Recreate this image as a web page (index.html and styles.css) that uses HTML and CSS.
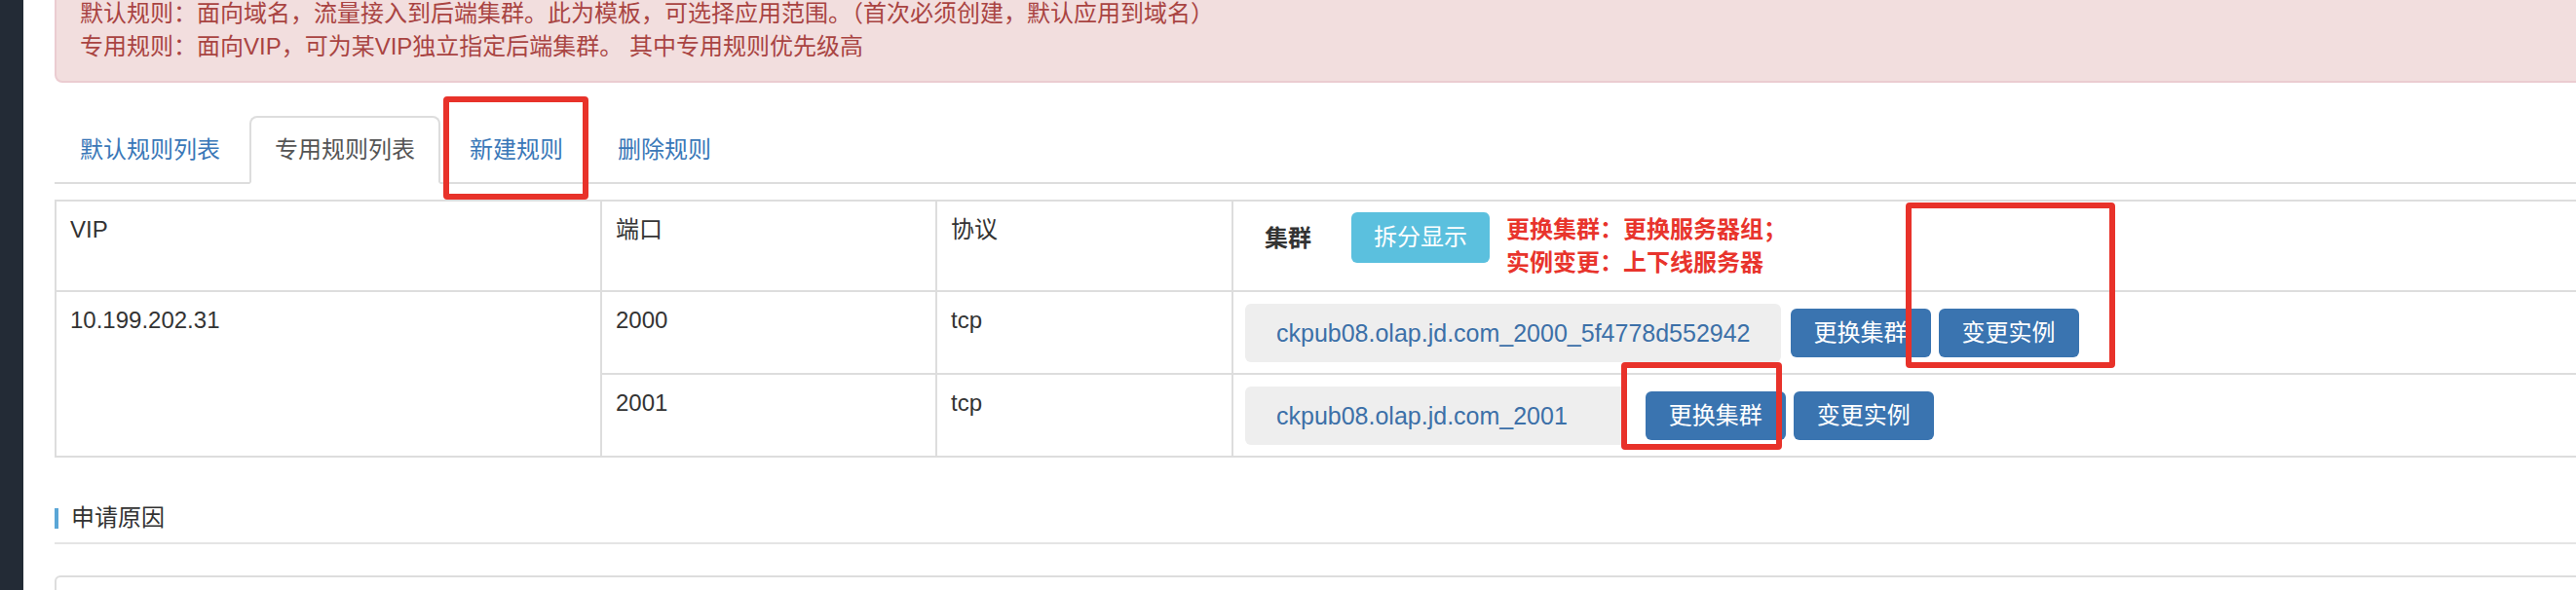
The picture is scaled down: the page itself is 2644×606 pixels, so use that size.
FILE: index.html
```html
<!DOCTYPE html>
<html lang="zh-CN">
<head>
<meta charset="utf-8">
<title>专用规则列表</title>
<link rel="stylesheet" href="styles.css">
</head>
<body>
<div class="page">
  <aside class="sidebar"></aside>
  <main class="content">
    <div class="alert">
      <p>默认规则：面向域名，流量接入到后端集群。此为模板，可选择应用范围。（首次必须创建，默认应用到域名）</p>
      <p>专用规则：面向VIP，可为某VIP独立指定后端集群。 其中专用规则优先级高</p>
    </div>

    <ul class="tabs">
      <li class="tab"><a>默认规则列表</a></li>
      <li class="tab tab-active"><a>专用规则列表</a></li>
      <li class="tab"><a>新建规则</a></li>
      <li class="tab"><a>删除规则</a></li>
    </ul>

    <table class="rules">
      <colgroup>
        <col class="col-vip">
        <col class="col-port">
        <col class="col-proto">
        <col class="col-cluster">
      </colgroup>
      <thead>
        <tr>
          <th>VIP</th>
          <th>端口</th>
          <th>协议</th>
          <th class="cluster-cell">
            <div class="cluster-head">
              <span class="cluster-label">集群</span>
              <span class="btn btn-info">拆分显示</span>
              <div class="cluster-tip">
                <div>更换集群：更换服务器组；</div>
                <div>实例变更：上下线服务器</div>
              </div>
            </div>
          </th>
        </tr>
      </thead>
      <tbody>
        <tr>
          <td rowspan="2">10.199.202.31</td>
          <td>2000</td>
          <td>tcp</td>
          <td class="cluster-cell">
            <div class="cluster-row">
              <span class="cluster-name">ckpub08.olap.jd.com_2000_5f4778d552942</span>
              <span class="btn btn-primary">更换集群</span>
              <span class="btn btn-primary">变更实例</span>
            </div>
          </td>
        </tr>
        <tr>
          <td>2001</td>
          <td>tcp</td>
          <td class="cluster-cell">
            <div class="cluster-row">
              <span class="cluster-name cluster-name-short">ckpub08.olap.jd.com_2001</span>
              <span class="btn btn-primary">更换集群</span>
              <span class="btn btn-primary">变更实例</span>
            </div>
          </td>
        </tr>
      </tbody>
    </table>

    <section class="reason">
      <h4 class="reason-title"><span class="reason-bar"></span>申请原因</h4>
      <div class="reason-box"></div>
    </section>
  </main>

  <div class="mark mark-new"></div>
  <div class="mark mark-instance"></div>
  <div class="mark mark-cluster"></div>
</div>
</body>
</html>
```

FILE: styles.css
```css
html, body {
  margin: 0;
  padding: 0;
  overflow: hidden;
  background: #fff;
}

body {
  font-family: "Liberation Sans", "Noto Sans CJK SC", sans-serif;
  font-size: 24px;
  line-height: 34px;
  color: #333;
}

.page {
  position: relative;
  display: flex;
  min-height: 606px;
}

.sidebar {
  flex: 0 0 24px;
  background: #232b36;
}

.content {
  flex: 0 0 2700px;
  padding-left: 32px;
}

/* alert */
.alert {
  margin-top: -25px;
  padding: 20px 24px 18px 24px;
  border: 2px solid #ebccd1;
  border-radius: 8px;
  background: #f2dede;
  color: #a94442;
}

.alert p {
  margin: 0;
}

/* tabs */
.tabs {
  list-style: none;
  margin: 34px 0 0;
  padding: 0;
  display: flex;
  border-bottom: 2px solid #ddd;
}

.tab {
  margin-right: 4px;
  margin-bottom: -2px;
}

.tab a {
  display: block;
  padding: 16px 24px;
  border: 2px solid transparent;
  border-radius: 8px 8px 0 0;
  color: #3a78b8;
}

.tab-active a {
  color: #555;
  background: #fff;
  border-color: #ddd #ddd transparent;
}

/* table */
.rules {
  margin-top: 16px;
  width: 100%;
  border-collapse: collapse;
  table-layout: fixed;
  border: 2px solid #ddd;
}

.col-vip { width: 560px; }
.col-port { width: 344px; }
.col-proto { width: 304px; }

.rules th,
.rules td {
  border: 2px solid #ddd;
  padding: 12px 14px;
  text-align: left;
  vertical-align: top;
  font-weight: normal;
}

.rules .cluster-cell {
  padding: 12px 12px 11px;
}

.cluster-head {
  display: flex;
  align-items: flex-start;
}

.cluster-label {
  font-weight: 700;
  margin: 9px 0 0 20px;
}

.btn {
  display: inline-flex;
  align-items: center;
  justify-content: center;
  box-sizing: border-box;
  height: 50px;
  border-radius: 6px;
  color: #fff;
  white-space: nowrap;
}

.btn-info {
  height: 52px;
  padding: 0 23px;
  margin: -1px 0 0 41px;
  background: #5bc0de;
}

.cluster-tip {
  margin-left: 17px;
  color: #e8342c;
  font-weight: 700;
}

.cluster-row {
  display: flex;
  align-items: center;
}

.cluster-name {
  display: flex;
  align-items: center;
  height: 60px;
  padding: 0 31px 0 32px;
  margin-right: 10px;
  background: #eee;
  border-radius: 6px;
  color: #3c70a8;
  font-size: 25px;
  white-space: nowrap;
}

.cluster-name-short {
  padding-right: 60px;
  margin-right: 20px;
}

.btn-primary {
  width: 144px;
  background: #3a74b0;
}

.btn + .btn {
  margin-left: 8px;
}

/* reason section */
.reason-title {
  display: flex;
  align-items: center;
  margin: 45px 0 0;
  padding-bottom: 8px;
  border-bottom: 2px solid #e5e5e5;
  font-size: 24px;
  line-height: 34px;
  font-weight: normal;
  color: #333;
}

.reason-bar {
  width: 4px;
  height: 21px;
  margin-right: 13px;
  background: #5aa6d6;
}

.reason-box {
  margin-top: 32px;
  height: 120px;
  border: 2px solid #ddd;
  border-radius: 6px;
}

/* annotation marks drawn over the screenshot */
.mark {
  position: absolute;
  box-sizing: border-box;
  border: 6px solid #e8322a;
  border-radius: 4px;
}

.mark-new {
  left: 455px;
  top: 99px;
  width: 149px;
  height: 106px;
}

.mark-instance {
  left: 1956px;
  top: 208px;
  width: 215px;
  height: 170px;
}

.mark-cluster {
  left: 1664px;
  top: 372px;
  width: 165px;
  height: 90px;
}
```
